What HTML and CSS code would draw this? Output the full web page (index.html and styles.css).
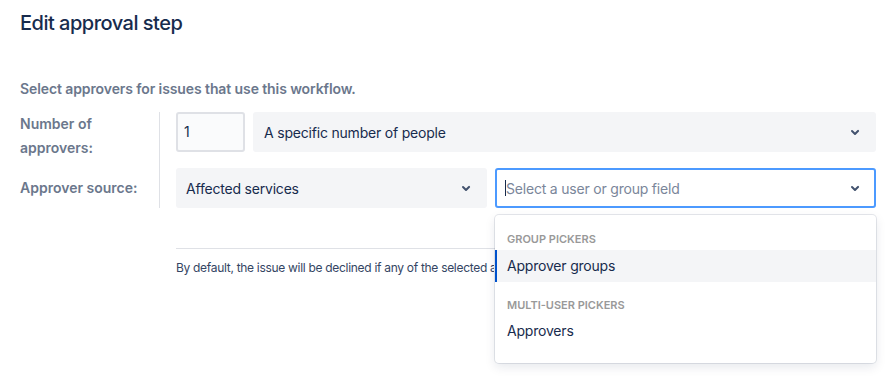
FILE: index.html
```html
<!DOCTYPE html>
<html lang="en">
<head>
    <meta charset="UTF-8">
    <title>Edit approval step</title>
    <link rel="stylesheet" href="styles.css">
</head>
<body>
    <div class="page">
        <h1 class="page-title">Edit approval step</h1>

        <p class="intro">Select approvers for issues that use this workflow.</p>

        <div class="form-grid">
            <div class="labels">
                <div class="label label-tall">Number of approvers:</div>
                <div class="label">Approver source:</div>
            </div>

            <div class="fields">
                <div class="field-row">
                    <div class="text-input">1</div>
                    <div class="select select-grow">
                        <span>A specific number of people</span>
                        <svg class="chevron" width="24" height="24" viewBox="0 0 24 24"><path d="M8.3 10.3a1 1 0 0 1 1.4 0L12 12.6l2.3-2.3a1 1 0 1 1 1.4 1.4l-3 3a1 1 0 0 1-1.4 0l-3-3a1 1 0 0 1 0-1.4z" fill="currentColor"/></svg>
                    </div>
                </div>

                <div class="field-row">
                    <div class="select select-source">
                        <span>Affected services</span>
                        <svg class="chevron" width="24" height="24" viewBox="0 0 24 24"><path d="M8.3 10.3a1 1 0 0 1 1.4 0L12 12.6l2.3-2.3a1 1 0 1 1 1.4 1.4l-3 3a1 1 0 0 1-1.4 0l-3-3a1 1 0 0 1 0-1.4z" fill="currentColor"/></svg>
                    </div>

                    <div class="picker">
                        <div class="select select-focused">
                            <span class="placeholder"><i class="caret"></i>Select a user or group field</span>
                            <svg class="chevron" width="24" height="24" viewBox="0 0 24 24"><path d="M8.3 10.3a1 1 0 0 1 1.4 0L12 12.6l2.3-2.3a1 1 0 1 1 1.4 1.4l-3 3a1 1 0 0 1-1.4 0l-3-3a1 1 0 0 1 0-1.4z" fill="currentColor"/></svg>
                        </div>

                        <div class="menu">
                            <div class="menu-group">
                                <div class="group-heading">Group pickers</div>
                                <div class="option option-active">Approver groups</div>
                            </div>
                            <div class="menu-group">
                                <div class="group-heading">Multi-user pickers</div>
                                <div class="option">Approvers</div>
                            </div>
                        </div>
                    </div>
                </div>
            </div>
        </div>

        <div class="footnote">
            <p class="footnote-text">By default, the issue will be declined if any of the selected approvers declines it.</p>
        </div>
    </div>
</body>
</html>
```

FILE: styles.css
```css
* {
    margin: 0;
    padding: 0;
    box-sizing: border-box;
}

html,
body {
    min-height: 100%;
}

body {
    font-family: Inter, "Noto Sans", Arial, sans-serif;
    background: #fff;
    color: #172B4D;
    font-size: 14px;
}

.page {
    min-height: 378px;
    padding: 11px 11px 0 20px;
}

.page-title {
    font-size: 20px;
    font-weight: 500;
    line-height: 24px;
    color: #172B4D;
    letter-spacing: -0.5px;
}

.intro {
    margin-top: 44px;
    font-weight: 600;
    line-height: 20px;
    color: #6B778C;
    letter-spacing: -0.1px;
}

.form-grid {
    display: flex;
    margin-top: 13px;
}

.labels {
    width: 140px;
    border-right: 1px solid #DFE1E6;
    display: flex;
    flex-direction: column;
    gap: 16px;
}

.label {
    height: 40px;
    line-height: 40px;
    font-weight: 600;
    color: #6B778C;
}

.label-tall {
    line-height: 24px;
    padding-right: 40px;
}

.fields {
    flex: 1;
    padding-left: 16px;
    display: flex;
    flex-direction: column;
    gap: 16px;
}

.field-row {
    display: flex;
    gap: 8px;
    height: 40px;
}

.text-input {
    width: 69px;
    height: 40px;
    border: 2px solid #DFE1E6;
    border-radius: 3px;
    background: #FAFBFC;
    padding: 0 6px;
    line-height: 36px;
}

.select {
    height: 40px;
    border-radius: 3px;
    background: #F4F5F7;
    display: flex;
    align-items: center;
    justify-content: space-between;
    padding: 0 9px 0 11px;
    color: #172B4D;
    letter-spacing: -0.2px;
}

.select-grow {
    flex: 1;
}

.select-source {
    width: 311px;
    padding-left: 10px;
}

.chevron {
    color: #42526E;
    flex-shrink: 0;
}

.picker {
    flex: 1;
    position: relative;
}

.select-focused {
    background: #fff;
    border: 2px solid #4C9AFF;
    padding: 0 7px 0 8px;
}

.placeholder {
    color: #7A869A;
    display: flex;
    align-items: center;
}

.caret {
    display: inline-block;
    width: 1px;
    height: 16px;
    background: #172B4D;
}

.menu {
    position: absolute;
    top: 47px;
    left: 0;
    right: 0;
    background: #fff;
    border-radius: 4px;
    box-shadow: 0 0 0 1px rgba(9, 30, 66, 0.1), 0 4px 11px rgba(9, 30, 66, 0.1);
    padding-bottom: 16px;
    z-index: 2;
}

.menu-group {
    padding-top: 15px;
}

.menu-group:first-child {
    padding-top: 16px;
}

.group-heading {
    font-size: 11px;
    font-weight: 600;
    line-height: 16px;
    text-transform: uppercase;
    color: #999999;
    padding-left: 12px;
    margin-bottom: 2px;
}

.menu-group:first-child .group-heading {
    margin-bottom: 3px;
}

.option {
    height: 32px;
    line-height: 32px;
    padding-left: 12px;
    color: #172B4D;
    letter-spacing: -0.2px;
}

.option-active {
    background: #F4F5F7;
    border-left: 2px solid #0052CC;
    padding-left: 10px;
}

.footnote {
    margin: 40px 0 0 156px;
    border-top: 1px solid #DFE1E6;
    padding-top: 11px;
}

/* the open menu covers the rest of this line */
.footnote-text {
    width: 318px;
    font-size: 12px;
    line-height: 16px;
    color: #344563;
    white-space: nowrap;
    overflow: hidden;
    letter-spacing: -0.3px;
}
```
